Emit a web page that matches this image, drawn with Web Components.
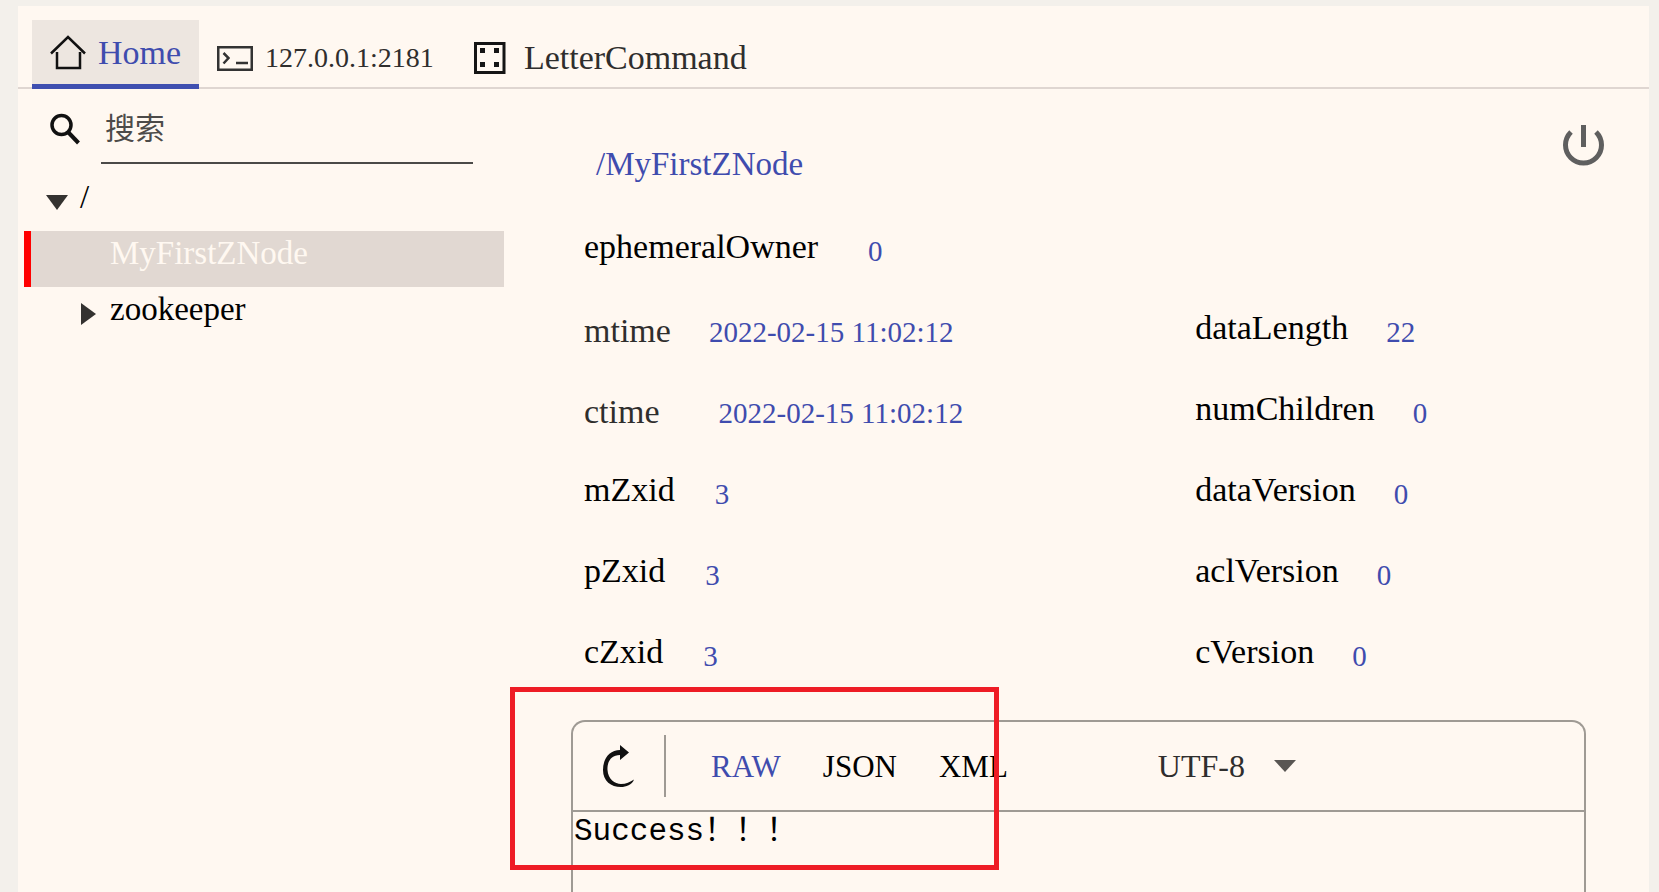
<!DOCTYPE html>
<html lang="zh">
<head>
<meta charset="utf-8">
<title>ZooKeeper</title>
<style>
html, body { margin: 0; background: #f3f0eb; }
body { font-family: "Liberation Serif", "Noto Sans CJK SC", serif; font-size: 34px; color: #000; overflow: hidden; }
</style>
</head>
<body>
<zk-app></zk-app>
<script>
const reset = `
  *, *::before, *::after { box-sizing: border-box; }
  button, input, select, textarea { font: inherit; color: inherit; background: none; border: 0; border-radius: 0; margin: 0; padding: 0; outline: 0; }
  button, select { cursor: pointer; }
  svg { display: block; flex: none; }
`;
function define(name, html, init) {
  const template = document.createElement('template');
  template.innerHTML = html.replace('<style>', '<style>' + reset);
  customElements.define(name, class extends HTMLElement {
    constructor() {
      super();
      this.attachShadow({ mode: 'open' }).append(template.content.cloneNode(true));
    }
    connectedCallback() { if (init) init(this, this.shadowRoot); }
  });
}

define('zk-tab', `
<style>
  :host { display: flex; color: #2f2e2d; margin-bottom: -2px; }
  button { display: flex; align-items: center; gap: 12px; height: 69px; padding: 12px 18px 5px 18px; line-height: 40px; white-space: nowrap; }
  :host([active]) button { color: #3f4cae; background: #ede6e0; border-bottom: 5px solid #3f4fb0; padding-top: 2px; padding-bottom: 0; }
  :host([numeric]) button { font-size: 28px; }
  :host([wide]) button { gap: 18px; }
</style>
<button type="button" role="tab"><slot name="icon"></slot><slot></slot></button>`);

define('zk-tabs', `
<style>
  :host { display: block; }
  nav { display: flex; padding: 14px 0 0 14px; border-bottom: 2px solid #dfd6d1; }
</style>
<nav role="tablist"><slot></slot></nav>`);

define('zk-search', `
<style>
  :host { display: flex; align-items: flex-start; padding: 17px 31px 0 32px; height: 86px; }
  label { padding: 7px 21px 0 0; }
  input { flex: 1; min-width: 0; height: 58px; padding: 0 4px 10px; font-size: 30px; border-bottom: 2px solid #4b4a48; }
  input::placeholder { color: #4d4b49; opacity: 1; }
</style>
<label for="q" aria-label="搜索"><svg width="30" height="32" viewBox="0 0 30 32" fill="none" stroke="#111"><circle cx="11.500" cy="12" r="9.500" stroke-width="3.500"/><path d="M18 19 28.500 30" stroke-width="4"/></svg></label>
<input id="q" type="text" placeholder="搜索">`);

define('zk-node', `
<style>
  :host { display: block; }
  button { display: flex; align-items: flex-start; width: 100%; height: 56px; padding-left: 22px; line-height: 44px; font-size: 33px; text-align: left; }
  i { flex: none; width: 29px; padding-top: 20px; }
  :host([level="1"]) button { padding-left: 57px; }
  :host([selected]) button { background: #e1d8d2; color: #fff8f1; border-left: 7px solid #f00; padding-left: 50px; }
  i svg { display: none; }
  :host([state="open"]) .open, :host([state="closed"]) .closed { display: block; }
  :host([state="open"]) i { width: 34px; }
  .closed { margin-top: -4px; }
</style>
<button type="button"><i><svg class="open" width="22" height="15" viewBox="0 0 22 15"><path d="M0 0H22L11 15Z" fill="#343230"/></svg><svg class="closed" width="15" height="22" viewBox="0 0 15 22"><path d="M0 0V22L15 11Z" fill="#343230"/></svg></i><slot></slot></button>`);

define('zk-tree', `
<style>
  :host { display: block; padding-left: 6px; }
</style>
<slot></slot>`);

define('zk-stat', `
<style>
  :host { display: block; height: 81px; }
  dl { display: flex; gap: 38px; margin: 0; line-height: 42px; white-space: nowrap; }
  dt.low { padding-top: 3px; color: #2f2e2d; }
  dd { margin: 0; padding-top: 4px; color: #3f4cae; font-size: 29px; }
  :host([gap="s"]) dl { gap: 40px; }
  :host([gap="m"]) dl { gap: 50px; }
  :host([gap="l"]) dl { gap: 59px; }
</style>
<dl><dt></dt><dd></dd></dl>`, (el, root) => {
  const dt = root.querySelector('dt');
  dt.textContent = el.getAttribute('name');
  dt.classList.toggle('low', el.hasAttribute('low'));
  root.querySelector('dd').textContent = el.getAttribute('value');
});

define('zk-details', `
<style>
  :host { display: block; }
  header { display: flex; justify-content: space-between; align-items: flex-start; height: 137px; padding: 36px 45px 0 92px; }
  h1 { margin: 18px 0 0; font-size: 33px; font-weight: 400; line-height: 42px; color: #3f4cae; }
  .stats { display: grid; grid-template-columns: 61fr 39fr; padding: 0 63px 0 80px; }
</style>
<header><h1>/MyFirstZNode</h1>
<button type="button" aria-label="Disconnect"><svg width="41" height="41" viewBox="0 0 41 41" fill="none" stroke="#5f5f5f" stroke-width="5"><path d="M8 7C5 10 2.500 14.500 2.500 20A18 18 0 0 0 38.500 20C38.500 14.500 36 10 33 7"/><path d="M20.500 0V22"/></svg></button></header>
<div class="stats">
  <zk-stat name="ephemeralOwner" value="0" style="grid-column: 1 / -1" gap="m"></zk-stat>
  <zk-stat name="mtime" value="2022-02-15 11:02:12" low></zk-stat><zk-stat name="dataLength" value="22"></zk-stat>
  <zk-stat name="ctime" value="2022-02-15 11:02:12" low gap="l"></zk-stat><zk-stat name="numChildren" value="0"></zk-stat>
  <zk-stat name="mZxid" value="3" gap="s"></zk-stat><zk-stat name="dataVersion" value="0"></zk-stat>
  <zk-stat name="pZxid" value="3" gap="s"></zk-stat><zk-stat name="aclVersion" value="0"></zk-stat>
  <zk-stat name="cZxid" value="3" gap="s"></zk-stat><zk-stat name="cVersion" value="0"></zk-stat>
</div>`);

define('zk-editor', `
<style>
  :host { display: flex; flex-direction: column; flex: 1; position: relative; margin: 8px 63px 0 67px; border: 2px solid #9f9a94; border-bottom: 0; border-radius: 14px 14px 0 0; }
  .bar { display: flex; align-items: center; height: 90px; padding-left: 29px; border-bottom: 2px solid #9f9a94; }
  .rule { width: 2px; height: 62px; margin: 0 45px 0 29px; background: #9f9a94; }
  .formats { display: flex; gap: 42px; font-size: 31px; line-height: 40px; padding-top: 2px; }
  .formats .on { color: #3f4cae; }
  .charset { display: flex; align-items: center; margin-left: 150px; font-size: 32px; line-height: 40px; color: #2f2e2d; }
  select { appearance: none; height: 40px; padding-right: 50px; background: url("data:image/svg+xml,%3Csvg xmlns='http://www.w3.org/2000/svg' width='22' height='12'%3E%3Cpath d='M0 0H22L11 12Z' fill='%23595653'/%3E%3C/svg%3E") right 14px no-repeat; }
  textarea { flex: 1; min-height: 72px; padding: 0 1px; font: 31px/40px "Liberation Mono", "Noto Sans CJK SC", monospace; resize: none; overflow: hidden; }
  .mark { position: absolute; left: -63px; top: -35px; width: 489px; height: 183px; border: 5px solid #ee1c25; pointer-events: none; }
</style>
<div class="bar">
  <button type="button" aria-label="Refresh"><svg width="33" height="43" viewBox="0 0 33 43"><path d="M18 0 27 7.500 18 15V10C9 10 5 17 5.500 25 6 34 13 39 19 39 24 39 28 37 32 34.500 30 40 24 42 19 42 9 42 1 36 1 25 1 13 8 5 18 5Z" fill="#111"/></svg></button>
  <span class="rule"></span>
  <div class="formats"><button type="button" class="on">RAW</button><button type="button">JSON</button><button type="button">XML</button></div>
  <div class="charset"><select aria-label="Charset"><option>UTF-8</option></select></div>
</div>
<textarea aria-label="Node data" spellcheck="false">Success！！！</textarea>
<div class="mark"></div>`);

define('zk-app', `
<style>
  :host { display: flex; flex-direction: column; height: 100vh; padding: 6px 10px 0 18px; }
  .panel { display: flex; flex-direction: column; flex: 1; background: #fff8f1; }
  .body { display: grid; grid-template-columns: 486px 1fr; flex: 1; }
  main { display: flex; flex-direction: column; min-width: 0; }
</style>
<div class="panel">
  <zk-tabs>
    <zk-tab active><svg slot="icon" width="36" height="36" viewBox="0 0 36 36" fill="none" stroke="#111" stroke-width="2.500"><path d="M1 18.500 18 2 35 18.500M7 17V33H30V17"/></svg>Home</zk-tab>
    <zk-tab numeric><svg slot="icon" width="36" height="25" viewBox="0 0 36 25" fill="none" stroke="#333" stroke-width="2.500"><path d="M1.250 1.250H34.750V23.750H1.250ZM6.500 7 11.500 12 6.500 17.500M19 17H31"/></svg>127.0.0.1:2181</zk-tab>
    <zk-tab wide><svg slot="icon" width="36" height="32" viewBox="0 0 36 32"><path d="M5.500 1.500H34V30.500H5.500Z" fill="none" stroke="#151515" stroke-width="3"/><path d="M10 6h5v5h-5zM24 6h5v5h-5zM10 20h5v5h-5zM24 20h5v5h-5z" fill="#151515"/></svg>LetterCommand</zk-tab>
  </zk-tabs>
  <div class="body">
    <aside>
      <zk-search></zk-search>
      <zk-tree><zk-node state="open">/</zk-node><zk-node level="1" selected>MyFirstZNode</zk-node><zk-node level="1" state="closed">zookeeper</zk-node></zk-tree>
    </aside>
    <main><zk-details></zk-details><zk-editor></zk-editor></main>
  </div>
</div>`);
</script>
</body>
</html>
